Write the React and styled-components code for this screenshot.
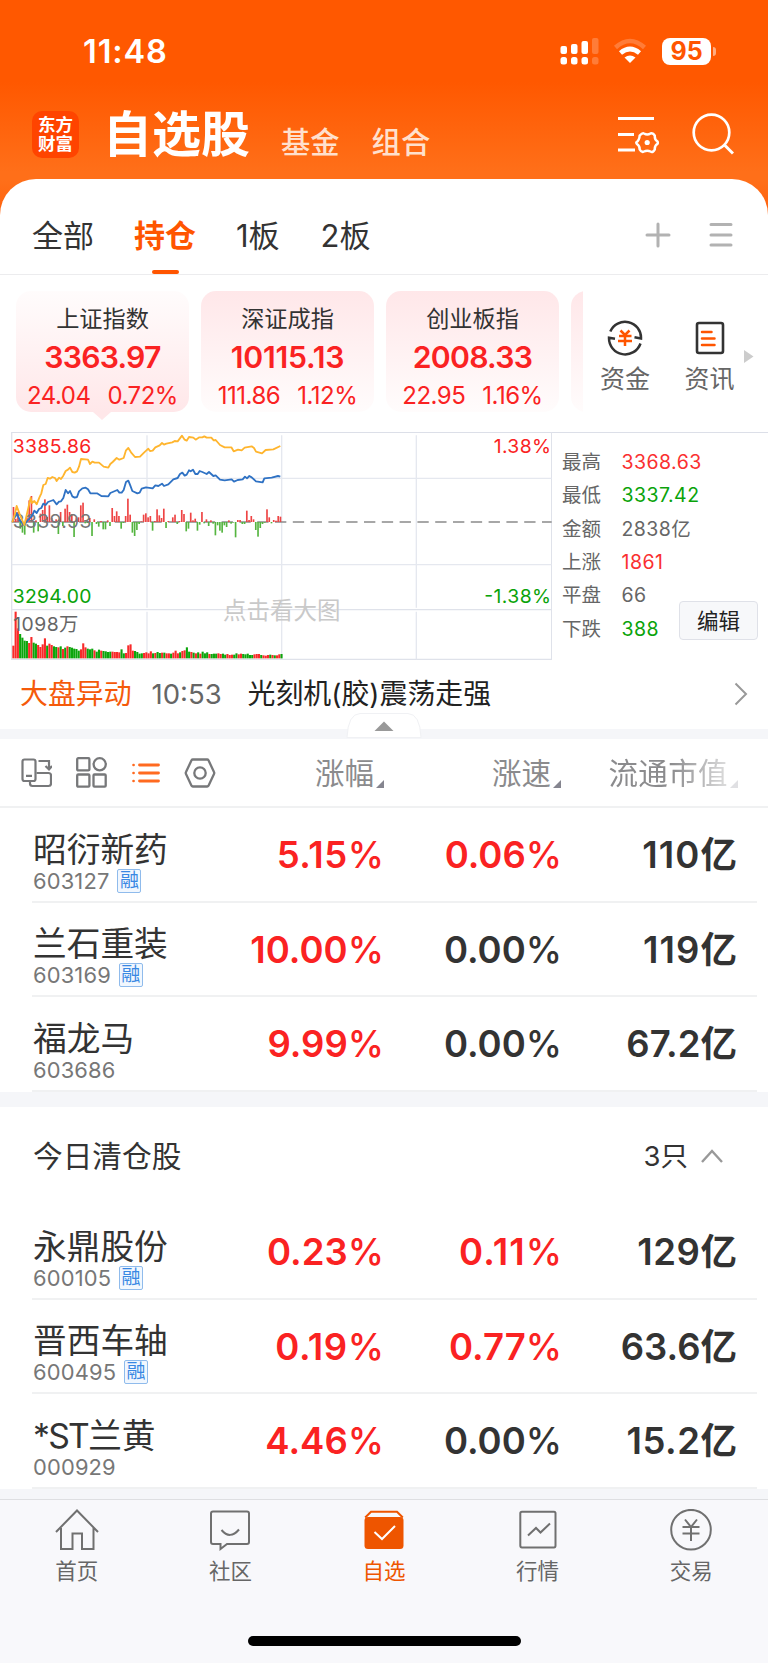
import React from "react";
import styled, { createGlobalStyle } from "styled-components";

const RED = "#fa2222";
const GREEN = "#0aa30a";
const ORANGE = "#ff5500";
const INK = "#333333";

const GlobalStyle = createGlobalStyle`
  * { box-sizing: border-box; }
  body {
    margin: 0;
    background: #fff;
    color: ${INK};
    font-family: Inter, "Noto Sans CJK SC", sans-serif;
  }
  svg { display: block; flex: none; }
`;

const Screen = styled.div`
  width: 768px;
  height: 1663px;
  overflow: hidden;
  display: flex;
  flex-direction: column;
  background: #fff;
`;

/* ---------- header ---------- */
const Header = styled.header`
  height: 226px;
  flex: none;
  margin-bottom: -47px;
  background: linear-gradient(180deg, #ff5800 0, #ff5800 82px, #ff6f19 172px, #ff6f19 180px, #ff5e0a 226px);
`;

const StatusBar = styled.div`
  height: 102px;
  padding: 0 52px 0 83px;
  display: flex;
  align-items: center;
  color: #fff;
`;

const Clock = styled.div`
  padding-top: 1px;
  font-size: 32.5px;
  font-weight: 600;
  line-height: 40px;
  letter-spacing: 0.9px;
  margin-right: auto;
`;

const Battery = styled.div`
  width: 49px;
  height: 27px;
  margin: 0 2px 0 15px;
  border-radius: 8px;
  background: #fff;
  color: ${ORANGE};
  font-size: 25px;
  font-weight: 700;
  line-height: 27px;
  text-align: center;
`;

const BatteryCap = styled.div`
  width: 3px;
  height: 9px;
  border-radius: 0 4px 4px 0;
  background: rgba(255, 255, 255, 0.5);
`;

const TitleBar = styled.div`
  height: 64px;
  padding: 0 34px 0 32px;
  display: flex;
  align-items: center;
`;

const Logo = styled.div`
  width: 47px;
  height: 47px;
  border-radius: 10px;
  background: #ff4400;
  color: #fff;
  padding-top: 4px;
  font-size: 17.5px;
  font-weight: 700;
  line-height: 19.5px;
  text-align: center;
`;

const PageTitle = styled.h1`
  margin: 2px 31px 0 24px;
  font-size: 49px;
  font-weight: 700;
  line-height: 60px;
  color: #fff;
`;

const HeaderLink = styled.span`
  margin: 18px 32px 0 0;
  font-size: 29.3px;
  font-weight: 500;
  line-height: 36px;
  color: #ffe0cd;
`;

const HeaderIcons = styled.div`
  margin-left: auto;
  display: flex;
  gap: 33px;
`;

/* ---------- group tabs ---------- */
const TabBar = styled.nav`
  height: 96px;
  flex: none;
  padding: 0 35px 0 32px;
  border-radius: 36px 36px 0 0;
  border-bottom: 1px solid #ececee;
  background: #fff;
  display: flex;
  align-items: stretch;
`;

const GroupTab = styled.div`
  margin-right: ${(p) => p.$gap}px;
  padding-top: 37px;
  display: flex;
  flex-direction: column;
  align-items: center;
  justify-content: space-between;
  font-size: 31px;
  line-height: 40px;
  font-weight: ${(p) => (p.$active ? 700 : 400)};
  color: ${(p) => (p.$active ? ORANGE : INK)};
  &::after {
    content: "";
    width: 27px;
    height: 4px;
    border-radius: 2px;
    background: ${(p) => (p.$active ? ORANGE : "transparent")};
  }
`;

const TabActions = styled.div`
  margin: 16px 0 0 auto;
  display: flex;
  align-items: center;
  gap: 38px;
`;

/* ---------- indices ---------- */
const IndexStrip = styled.section`
  height: 157px;
  flex: none;
  padding: 16px 0 0 16px;
  display: flex;
`;

const IndexList = styled.div`
  width: 567px;
  flex: none;
  height: 130px;
  display: flex;
  gap: 12px;
  overflow: hidden;
`;

const IndexCard = styled.div`
  position: relative;
  width: 173px;
  height: 121px;
  flex: none;
  padding-top: 12px;
  border-radius: 15px;
  text-align: center;
  color: ${RED};
  background: linear-gradient(
    ${(p) => (p.$active ? "0deg" : "180deg")}, #ffe7e9, #fffcfc
  );
  &::after {
    content: "";
    display: ${(p) => (p.$active ? "block" : "none")};
    position: absolute;
    left: 77px;
    top: 121px;
    border: 9px solid transparent;
    border-top: 8px solid #ffe7e9;
    border-bottom: 0;
  }
`;

const IndexName = styled.div`
  font-size: 23.2px;
  line-height: 32px;
  color: ${INK};
`;

const IndexValue = styled.div`
  margin-top: 6px;
  font-size: 30.2px;
  line-height: 32px;
  font-weight: 600;
  letter-spacing: ${(p) => p.$track}px;
`;

const IndexChange = styled.div`
  margin-top: 8px;
  display: flex;
  justify-content: center;
  gap: 17px;
  font-size: 24px;
  line-height: 29px;
  letter-spacing: -0.5px;
`;

const Shortcut = styled.div`
  width: ${(p) => p.$width}px;
  flex: none;
  padding-top: 29px;
  display: flex;
  flex-direction: column;
  align-items: center;
  gap: 7px;
  font-size: 25px;
  line-height: 32px;
  color: #666;
`;

const ArrowSlot = styled.div`
  padding: 59px 0 0 -8px;
  margin-left: -8px;
  padding-top: 59px;
`;

/* ---------- chart ---------- */
const MarketPanel = styled.section`
  height: 230px;
  flex: none;
  margin-left: 11px;
  display: flex;
  border-top: 1.5px solid #dcdfe8;
`;

const ChartSvg = styled.svg`
  margin-top: -1px;
  font-family: Inter, "Noto Sans CJK SC", sans-serif;
`;

const Stats = styled.div`
  position: relative;
  flex: 1;
  padding: 12px 0 0 10px;
`;

const StatRow = styled.div`
  height: 33.45px;
  display: grid;
  grid-template-columns: 59.5px 1fr;
  align-items: center;
  font-size: 19.5px;
  line-height: 30px;
  color: #666;
`;

const StatValue = styled.span`
  letter-spacing: 0.45px;
  color: ${(p) => p.$color || "#666"};
`;

const EditButton = styled.button`
  position: absolute;
  right: 10px;
  top: 168px;
  width: 79px;
  height: 39px;
  padding: 0;
  border: 1px solid #dfe1e8;
  border-radius: 4px;
  background: #f7f8fa;
  font: 21.5px/36px Inter, "Noto Sans CJK SC", sans-serif;
  color: #222;
`;

/* ---------- news ---------- */
const NewsRow = styled.section`
  height: 67px;
  flex: none;
  padding: 0 20px 3px;
  display: flex;
  align-items: center;
  line-height: 36px;
  font-size: 27.9px;
`;

const NewsTag = styled.span`
  color: #f55a0a;
  margin-right: 20px;
`;

const NewsTime = styled.span`
  width: 96px;
  font-size: 27.5px;
  color: #666;
`;

const NewsTitle = styled.span`
  flex: 1;
  color: #222;
`;

const Divider = styled.div`
  height: ${(p) => p.$height}px;
  flex: none;
  background: #f5f6f9;
  display: flex;
  justify-content: center;
  align-items: flex-end;
`;

const CollapseHandle = styled.svg`
  margin-bottom: 1px;
  overflow: visible;
`;

/* ---------- table ---------- */
const TableHead = styled.div`
  height: 69px;
  flex: none;
  padding-left: 21px;
  display: grid;
  grid-template-columns: 195px 168px 177px 177px;
  align-items: center;
  border-bottom: 2px solid #f0f1f2;
`;

const ViewIcons = styled.div`
  display: flex;
  align-items: center;
  justify-content: space-between;
`;

const ColumnLabel = styled.div`
  display: flex;
  justify-content: flex-end;
  align-items: flex-end;
  gap: 2px;
  font-size: 29.5px;
  line-height: 36px;
  color: #8b8b8d;
  white-space: nowrap;
  ${(p) => p.$fade && "letter-spacing: 0.4px; mask-image: linear-gradient(90deg, #000 62%, rgba(0,0,0,.25) 96%);"}
`;

const SortMark = styled.i`
  border: 4px solid transparent;
  border-right-color: #85858f;
  border-bottom-color: #85858f;
  margin-bottom: 3px;
`;

const StockRow = styled.div`
  height: 94.5px;
  flex: none;
  margin: 0 11px 0 32px;
  display: grid;
  grid-template-columns: 168px 184px 178px 175px;
  align-items: center;
  border-bottom: 2px solid #f0f1f2;
`;

const StockName = styled.div`
  padding-left: 1px;
  margin-top: 17px;
  font-size: 33.7px;
  line-height: 36px;
  white-space: nowrap;
`;

const StockPrefix = styled.span`
  letter-spacing: -1.7px;
`;

const StockCode = styled.div`
  padding-left: 1px;
  display: flex;
  align-items: center;
  gap: 8px;
  height: 26px;
  font-size: 21.9px;
  line-height: 26px;
  letter-spacing: 0.15px;
  color: #777;
`;

const MarginBadge = styled.span`
  width: 24px;
  height: 24px;
  border: 1.5px solid #8fbbec;
  border-radius: 2px;
  background: #f1f7fe;
  color: #3988e3;
  font-size: 19px;
  line-height: 21px;
  letter-spacing: 0;
  text-align: center;
`;

const Figure = styled.div`
  margin-top: 2px;
  text-align: right;
  font-size: 36.5px;
  line-height: 40px;
  font-weight: 600;
  letter-spacing: ${(p) => p.$track}px;
  white-space: nowrap;
  color: ${(p) => (p.$up ? RED : INK)};
`;

const Unit = styled.span`
  font-weight: ${(p) => (p.$light ? 500 : 600)};
  letter-spacing: 0;
`;

const SectionHead = styled.div`
  height: 98.5px;
  flex: none;
  padding: 1px 45px 0 33px;
  display: flex;
  align-items: center;
  font-size: 29.7px;
  line-height: 36px;
`;

const SectionCount = styled.span`
  margin: 0 13px 0 auto;
  font-size: 27.5px;
`;

/* ---------- bottom bar ---------- */
const BottomBar = styled.footer`
  flex: 1;
  border-top: 1px solid #dedfe2;
  background: #f8f8fb;
  display: flex;
  flex-direction: column;
  align-items: center;
  justify-content: space-between;
  padding-bottom: 17px;
`;

const NavItems = styled.div`
  width: 100%;
  padding-top: 9px;
  display: grid;
  grid-template-columns: repeat(5, 1fr);
`;

const NavItem = styled.div`
  display: flex;
  flex-direction: column;
  align-items: center;
  font-size: 21.5px;
  line-height: 28px;
  gap: 6px;
  color: ${(p) => (p.$active ? "#ee5500" : "#666")};
`;

const HomeIndicator = styled.div`
  width: 273px;
  height: 10px;
  border-radius: 5px;
  background: #000;
`;

/* ---------- icons ---------- */
const SignalIcon = () => (
  <svg width="39" height="28" viewBox="0 0 39 28" fill="#fff">
    <rect x="0.5" y="9" width="6.5" height="8" rx="2" />
    <rect x="11" y="7" width="6.5" height="10" rx="2" />
    <rect x="21.5" y="4" width="6.5" height="13" rx="2" />
    <rect x="32" y="1" width="6.5" height="16" rx="2" opacity=".22" />
    <rect x="0.5" y="20" width="6.5" height="7.5" rx="2.5" />
    <rect x="11" y="20" width="6.5" height="7.5" rx="2.5" />
    <rect x="21.5" y="20" width="6.5" height="7.5" rx="2.5" />
    <rect x="32" y="20" width="6.5" height="7.5" rx="2.5" opacity=".22" />
  </svg>
);

const WifiSvg = styled.svg`
  margin-left: 14px;
`;

const WifiIcon = () => (
  <WifiSvg width="34" height="26" viewBox="0 0 34 26">
    <path d="M2.500 9.500Q17-3.500 31.500 9.500" fill="none" stroke="#fff" strokeWidth="4.500" opacity=".22" />
    <path d="M7.500 15Q17 7 26.500 15" fill="none" stroke="#fff" strokeWidth="4.700" />
    <path d="M11.500 19.500Q17 15.500 22.500 19.500L17 25Z" fill="#fff" />
  </WifiSvg>
);

const FilterIcon = () => (
  <svg width="42" height="42" viewBox="0 0 42 42" fill="none" stroke="#fff">
    <path d="M1 5.500H37M1 21.500H17M1 37H18" strokeWidth="3" />
    <path
      d="M19.500 29.200Q22.300 27.500 22.700 22.500Q25.500 19.500 27 20.500Q30.200 22.500 33.500 20.500Q36 19.500 37.800 22.700Q37.500 26.500 40.300 28.200Q41.400 29.500 40.300 31Q37.500 32.800 37.800 36.500Q36 40 33.500 38.500Q30.200 36.800 27 38.500Q24.500 39.800 22.700 36.500Q22.800 32.800 20 31Q19 30 19.500 29.200Z"
      strokeWidth="2.500"
    />
    <circle cx="30.200" cy="29.500" r="2.600" fill="#fff" stroke="none" />
  </svg>
);

const SearchIcon = () => (
  <svg width="42" height="42" viewBox="0 0 42 42" fill="none" stroke="#fff" strokeWidth="2.700">
    <circle cx="19.500" cy="19.500" r="17.800" />
    <path d="M32 31.500L41 40.500" strokeWidth="3" />
  </svg>
);

const PlusIcon = () => (
  <svg width="26" height="26" viewBox="0 0 26 26" stroke="#b2b2b2" strokeWidth="3" strokeLinecap="round">
    <path d="M2 13H24M13 2V24" />
  </svg>
);

const MenuIcon = () => (
  <svg width="24" height="26" viewBox="0 0 24 26" stroke="#b2b2b2" strokeWidth="3" strokeLinecap="round">
    <path d="M2 2.500H22M2 13H22M2 23H22" />
  </svg>
);

const FundIcon = () => (
  <svg width="36" height="36" viewBox="0 0 36 36" fill="none" strokeWidth="2.500">
    <g stroke="#333">
      <path d="M3.300 11.500A16 16 0 0 1 34 18.500L27.500 17.300" />
      <path d="M33.500 23.500A16.200 16.200 0 0 1 2 17.800L8 18.700" />
    </g>
    <path d="M13.500 10.500L18 15L22.500 10.500M12 16H24.500M11 21H25M18 15V26" stroke={ORANGE} />
  </svg>
);

const NewsIcon = () => (
  <svg width="30" height="36" viewBox="0 0 30 36" fill="none">
    <rect x="2" y="3" width="26" height="30" rx="2" stroke="#333" strokeWidth="2.600" />
    <path d="M7 12H16.500M7 18.500H19.500M7 25H19.500" stroke={ORANGE} strokeWidth="2.500" strokeLinecap="round" />
  </svg>
);

const LayoutIcon = () => (
  <svg width="31" height="30" viewBox="0 0 31 30" fill="none" stroke="#77787a" strokeWidth="2.200">
    <path d="M9 23V25.500Q9 28 11.500 28H27.500Q30 28 30 25.500V17.500Q30 15 27.500 15H15.500" />
    <rect x="1.500" y="1.500" width="13" height="21.500" rx="2" />
    <path d="M5 17.800H11M17.500 3H28V10.500M24.500 8L28 11.500L31 8" />
  </svg>
);

const GridIcon = () => (
  <svg width="31" height="31" viewBox="0 0 31 31" fill="none" stroke="#77787a" strokeWidth="2.300">
    <rect x="1.200" y="1.200" width="12.200" height="12.200" rx="1" />
    <circle cx="23.700" cy="7.300" r="6.100" />
    <rect x="1.200" y="17.500" width="12.200" height="12.200" rx="1" />
    <rect x="17.500" y="17.500" width="12.200" height="12.200" rx="1" />
  </svg>
);

const ListIcon = () => (
  <svg width="28" height="20" viewBox="0 0 28 20" stroke="#ff6a20" strokeWidth="2.800" strokeLinecap="round">
    <path d="M7.500 2H26.500M7.500 10H26.500M7.500 18H26.500" />
    <path d="M1.500 2H1.600M1.500 10H1.600M1.500 18H1.600" strokeWidth="2.600" />
  </svg>
);

const HexIcon = () => (
  <svg width="32" height="30" viewBox="0 0 32 30" fill="none" stroke="#77787a" strokeWidth="2.300">
    <path d="M8.800 1.500H23.200Q24 1.500 24.500 2.300L30 14Q30.500 15 30 16L24.500 27.700Q24 28.500 23.200 28.500H8.800Q8 28.500 7.500 27.700L2 16Q1.500 15 2 14L7.500 2.300Q8 1.500 8.800 1.500Z" />
    <circle cx="16" cy="15" r="5.700" />
  </svg>
);

const navIcons = {
  home: <path d="M1 23L22 1.500L43 23M6 19V40H17.500V24.500H27V40H38.500V19" />,
  chat: <path d="M5 2.500H39Q41 2.500 41 4.500V33Q41 35 39 35H19L12.500 40V35H5Q3 35 3 33V4.500Q3 2.500 5 2.500ZM13.500 21Q22 31 31 20.500" />,
  pick: (
    <>
      <path d="M3.200 8.500L9 2.700H35L40.800 8.500" stroke="#ee5500" />
      <rect x="2.500" y="8" width="39" height="32" rx="3.500" fill="#ee5500" stroke="none" />
      <path d="M12.500 23L20 30L33 17" stroke="#fff" />
    </>
  ),
  market: <path d="M6 2.800H38Q39.500 2.800 39.500 4.300V36.500Q39.500 38.500 38 38.500H6Q4.300 38.500 4.300 36.500V4.300Q4.300 2.800 6 2.800ZM12 26.500L20 19L24.500 23.500L34 14.500" />,
  trade: (
    <>
      <circle cx="22" cy="20.700" r="19.800" />
      <path d="M16 10.500L22 18L28 10.500M13.500 18H30.500M13.500 24.500H30.500M22 18V32" />
    </>
  ),
};

const NavIcon = ({ name }) => (
  <svg width="44" height="42" viewBox="0 0 44 42" fill="none" stroke="#707070" strokeWidth="2">
    {navIcons[name]}
  </svg>
);

/* ---------- data ---------- */
const indices = [
  { name: "上证指数", value: "3363.97", diff: "24.04", pct: "0.72%", track: -0.75, active: true },
  { name: "深证成指", value: "10115.13", diff: "111.86", pct: "1.12%", track: -0.25 },
  { name: "创业板指", value: "2008.33", diff: "22.95", pct: "1.16%", track: -0.75 },
];

const stats = [
  ["最高", "3368.63", "#fa3030"],
  ["最低", "3337.42", GREEN],
  ["金额", "2838亿"],
  ["上涨", "1861", "#fa3030"],
  ["平盘", "66"],
  ["下跌", "388", GREEN],
];

const holdings = [
  { name: "昭衍新药", code: "603127", margin: true, change: "5.15%", speed: "0.06%", cap: "110亿" },
  { name: "兰石重装", code: "603169", margin: true, change: "10.00%", speed: "0.00%", cap: "119亿" },
  { name: "福龙马", code: "603686", change: "9.99%", speed: "0.00%", cap: "67.2亿" },
];

const cleared = [
  { name: "永鼎股份", code: "600105", margin: true, change: "0.23%", speed: "0.11%", cap: "129亿" },
  { name: "晋西车轴", code: "600495", margin: true, change: "0.19%", speed: "0.77%", cap: "63.6亿" },
  { prefix: "*ST", name: "兰黄", code: "000929", change: "4.46%", speed: "0.00%", cap: "15.2亿" },
];

const navItems = [
  ["home", "首页"],
  ["chat", "社区"],
  ["pick", "自选"],
  ["market", "行情"],
  ["trade", "交易"],
];

const leadLine =
  "37,292 44,270 50,243 60,270 73,300 82,262 92,218 96,234 103,228 110,238 118,218 124,205 130,180 137,177 143,159 150,161 157,156 165,159 170,168 177,158 183,162 190,152 197,138 204,134 210,128 217,141 224,143 231,139 237,125 243,102 264,104 270,117 277,110 284,113 297,113 311,125 325,128 331,117 338,111 350,99 358,104 371,99 378,76 385,69 393,82 405,96 420,95 432,83 445,71 450,78 458,77 466,67 479,61 486,54 492,59 499,56 517,52 524,48 533,49 546,32 554,44 560,47 567,36 580,38 587,44 598,37 607,37 613,34 620,38 634,38 641,46 647,45 660,60 674,67 694,67 701,79 714,74 725,76 734,68 755,64 762,69 768,80 786,85 797,75 820,73 841,63";
const indexLine =
  "37,290 50,264 60,287 73,300 83,286 96,273 103,257 110,264 117,252 124,249 130,236 137,240 144,231 160,225 170,238 177,230 183,229 190,219 197,195 204,205 210,198 217,214 224,218 231,216 237,199 247,190 257,188 264,193 271,205 291,205 304,213 325,214 331,204 352,195 358,203 365,203 371,195 378,171 385,167 391,182 397,198 412,205 419,203 425,191 438,187 458,190 466,181 475,183 486,176 492,183 505,178 520,163 533,159 540,147 547,143 554,152 560,149 567,136 572,139 579,134 586,147 593,147 599,138 607,141 620,147 627,141 640,153 647,151 660,164 674,166 695,163 702,170 713,165 728,163 735,155 741,160 748,153 755,157 768,169 788,172 793,160 815,158 834,153 841,155";

const flowBars = [
  45, 10, 30, -20, -32, -38, 12, 65, 78, -32, 5, -28, 25, 36, 68, 15, 50, 12, 3, 8, -36, 30, -12, 40, 52, 30, 22, -45, 14, 14,
  50, 58, -4, -3, 12, -42, 8, -6, -14, 3, -22, -22, 5, -12, 42, 18, 32, 18, -20, -3, 18, 70, 22, -32, -42, -24, -6, 2, 22, 26,
  14, 18, -26, 3, 38, 20, 12, 40, -18, 3, 0, 14, 22, -6, 3, 36, 24, -28, -20, 28, 5, 10, -26, -8, 30, -4, 8, -12, 5, -5,
  -40, -10, -26, -32, -10, -15, 5, -5, -2, -46, 6, 6, -6, -6, 34, 6, 18, 8, -24, -44, -18, -6, -2, 38, 14, -4, 6, 4, 18, 16,
];
const volumeBars = [
  38, 140, 90, 73, 62, 53, 52, 46, 64, 47, 44, 40, 34, 42, 60, 38, 44, 40, 36, 34, 33, 36, 28, 32, 36, 34, 32, 29, 28, 23,
  27, 45, 33, 29, 27, 29, 24, 20, 26, 23, 22, 21, 19, 20, 20, 19, 19, 18, 27, 15, 16, 39, 42, 23, 22, 19, 14, 15, 16, 18,
  15, 21, 15, 16, 19, 16, 17, 17, 15, 15, 14, 17, 23, 15, 18, 22, 24, 33, 20, 19, 17, 15, 18, 14, 20, 15, 18, 13, 13, 14,
  14, 15, 13, 14, 11, 13, 10, 11, 11, 15, 12, 14, 13, 12, 14, 10, 10, 12, 13, 13, 10, 9, 8, 10, 11, 10, 9, 9, 12, 13,
];
const volumeTone =
  "rrrggggrrggrrrrgrrggrgrgrgggggr" + "rrgggrggrggggrrrrggrrrrggggrrrrgrggrgrrgrrrgrrggrgrgrgggrgggrrggrrrggrrgggggrrrgrrrgrg" + "rrgg";

const QuoteChart = () => (
  <ChartSvg width="541" height="229" viewBox="33 21 1623 687" fill="none">
    <g stroke="#dfe2ea" strokeWidth="4">
      <path d="M35 22V703M1655 22V703M33 703H1656M35 554H1655" />
      <path d="M35 160H1655M35 419H1655M441 31V548M845 31V548M1249 31V548M441 560V703M845 560V703M1249 560V703" stroke="#e5e8ef" />
    </g>
    <path d="M35 291H1655" stroke="#8a8a8a" strokeWidth="4.500" strokeDasharray="34 19.400" strokeDashoffset="11" />
    <g>
      {flowBars.map((v, i) => (
        <rect key={i} x={38 + i * 6.73} y={v > 0 ? 291 - v : 291} width="5" height={Math.abs(v)} fill={v > 0 ? "#ee4444" : "#55b540"} />
      ))}
    </g>
    <g>
      {volumeBars.map((v, i) => (
        <rect key={i} x={37 + i * 6.76} y={700 - v} width="6.300" height={v} fill={volumeTone[i] === "r" ? "#f82a2a" : "#0ba50b"} />
      ))}
    </g>
    <g fontSize="58">
      <text x="38" y="85" fill={RED} textLength="236">3385.86</text>
      <text x="38" y="309" fill="#777" textLength="236">3339.93</text>
      <text x="38" y="533" fill={GREEN} textLength="236">3294.00</text>
      <text x="40" y="617" fill="#666" textLength="195">1098万</text>
      <text x="1481" y="85" fill={RED} textLength="172">1.38%</text>
      <text x="1453" y="533" fill={GREEN} textLength="200">-1.38%</text>
      <text x="669" y="582" fill="#c9c9c9" fontSize="70.500">点击看大图</text>
    </g>
    <polyline points={indexLine} stroke="#2f72c4" strokeWidth="5.500" strokeLinejoin="round" />
    <polyline points={leadLine} stroke="#ffb52e" strokeWidth="5.500" strokeLinejoin="round" />
  </ChartSvg>
);

/* Narrow "1" digits get a little extra tracking so the columns look even. */
const Value = ({ text, up }) => {
  const unit = text.slice(-1);
  const track = Math.max(0, (text.split("1").length - 1) * 0.55 - (text.length > 5 ? 0.5 : 0));
  return (
    <Figure $up={up} $track={track}>
      {text.slice(0, -1)}
      <Unit $light={unit === "%"}>{unit}</Unit>
    </Figure>
  );
};

const Stock = ({ stock }) => (
  <StockRow>
    <div>
      <StockName>
        {stock.prefix && <StockPrefix>{stock.prefix}</StockPrefix>}
        {stock.name}
      </StockName>
      <StockCode>
        {stock.code}
        {stock.margin && <MarginBadge>融</MarginBadge>}
      </StockCode>
    </div>
    <Value up text={stock.change} />
    <Value up={stock.speed !== "0.00%"} text={stock.speed} />
    <Value text={stock.cap} />
  </StockRow>
);

export default function App() {
  return (
    <Screen>
      <GlobalStyle />
      <Header>
        <StatusBar>
          <Clock>11:48</Clock>
          <SignalIcon />
          <WifiIcon />
          <Battery>95</Battery>
          <BatteryCap />
        </StatusBar>
        <TitleBar>
          <Logo>东方<br />财富</Logo>
          <PageTitle>自选股</PageTitle>
          <HeaderLink>基金</HeaderLink>
          <HeaderLink>组合</HeaderLink>
          <HeaderIcons>
            <FilterIcon />
            <SearchIcon />
          </HeaderIcons>
        </TitleBar>
      </Header>

      <TabBar>
        <GroupTab $gap={40}>全部</GroupTab>
        <GroupTab $gap={40} $active>持仓</GroupTab>
        <GroupTab $gap={41}>1板</GroupTab>
        <GroupTab $gap={0}>2板</GroupTab>
        <TabActions>
          <PlusIcon />
          <MenuIcon />
        </TabActions>
      </TabBar>

      <IndexStrip>
        <IndexList>
          {indices.map((x) => (
            <IndexCard key={x.name} $active={x.active}>
              <IndexName>{x.name}</IndexName>
              <IndexValue $track={x.track}>{x.value}</IndexValue>
              <IndexChange>
                <span>{x.diff}</span>
                <span>{x.pct}</span>
              </IndexChange>
            </IndexCard>
          ))}
          <IndexCard />
        </IndexList>
        <Shortcut $width={84}>
          <FundIcon />
          资金
        </Shortcut>
        <Shortcut $width={85}>
          <NewsIcon />
          资讯
        </Shortcut>
        <ArrowSlot>
          <svg width="10" height="13" viewBox="0 0 10 13">
            <path d="M0 0L9.500 6.500L0 13Z" fill="#ccc" />
          </svg>
        </ArrowSlot>
      </IndexStrip>

      <MarketPanel>
        <QuoteChart />
        <Stats>
          {stats.map(([label, value, color]) => (
            <StatRow key={label}>
              <span>{label}</span>
              <StatValue $color={color}>{value}</StatValue>
            </StatRow>
          ))}
          <EditButton>编辑</EditButton>
        </Stats>
      </MarketPanel>

      <NewsRow>
        <NewsTag>大盘异动</NewsTag>
        <NewsTime>10:53</NewsTime>
        <NewsTitle>光刻机(胶)震荡走强</NewsTitle>
        <svg width="14" height="24" viewBox="0 0 14 24" fill="none" stroke="#999" strokeWidth="2">
          <path d="M1.500 1.500L12 12L1.500 22.500" />
        </svg>
      </NewsRow>

      <Divider $height={10}>
        <CollapseHandle width="76" height="25" viewBox="0 0 76 25">
          <path d="M1 24.500Q2 1 14 0.500H62Q74 1 75 24.500Z" fill="#fff" stroke="#f0f1f4" />
          <path d="M28.500 18L38 8.500L47.500 18Z" fill="#999" />
        </CollapseHandle>
      </Divider>

      <TableHead>
        <ViewIcons>
          <LayoutIcon />
          <GridIcon />
          <ListIcon />
          <HexIcon />
        </ViewIcons>
        <ColumnLabel>涨幅<SortMark /></ColumnLabel>
        <ColumnLabel>涨速<SortMark /></ColumnLabel>
        <ColumnLabel $fade>流通市值<SortMark /></ColumnLabel>
      </TableHead>

      {holdings.map((s) => <Stock key={s.code} stock={s} />)}

      <Divider $height={15} />
      <SectionHead>
        今日清仓股
        <SectionCount>3只</SectionCount>
        <svg width="22" height="14" viewBox="0 0 22 14" fill="none" stroke="#999" strokeWidth="2.400">
          <path d="M1 13L11 2L21 13" />
        </svg>
      </SectionHead>

      {cleared.map((s) => <Stock key={s.code} stock={s} />)}
      <Divider $height={10} />

      <BottomBar>
        <NavItems>
          {navItems.map(([icon, label]) => (
            <NavItem key={icon} $active={icon === "pick"}>
              <NavIcon name={icon} />
              {label}
            </NavItem>
          ))}
        </NavItems>
        <HomeIndicator />
      </BottomBar>
    </Screen>
  );
}
